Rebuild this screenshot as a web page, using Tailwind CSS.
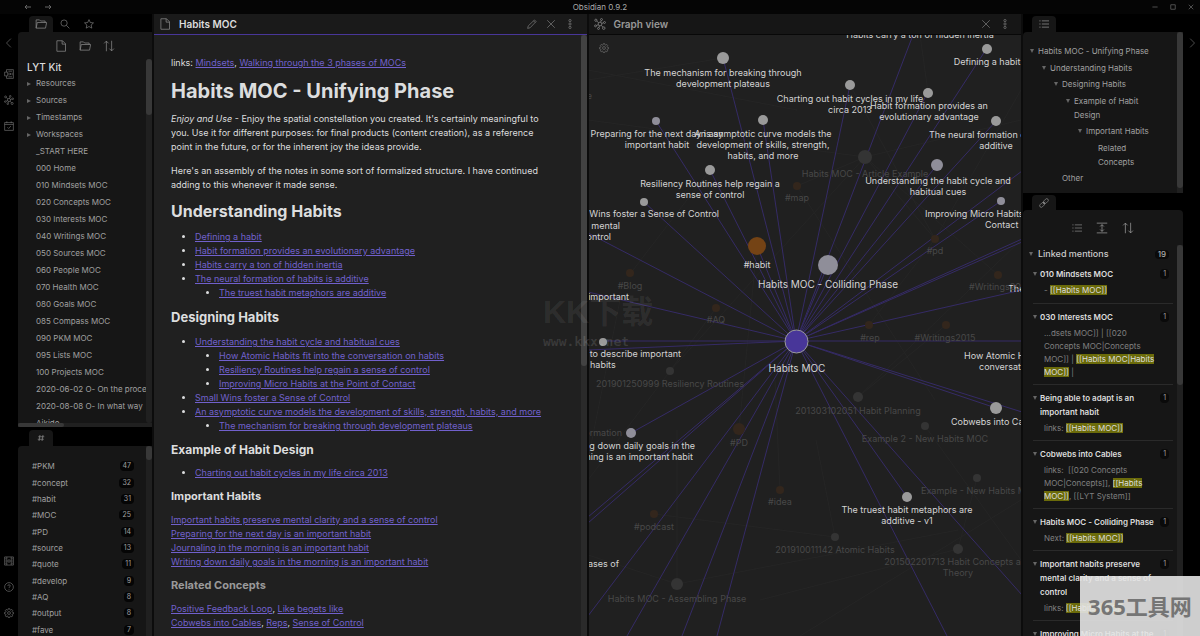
<!DOCTYPE html>
<html lang="en">
<head>
  <meta charset="UTF-8" />
  <meta name="viewport" content="width=device-width, initial-scale=1.0" />
  <title>Obsidian 0.9.2</title>
  <script src="https://cdn.jsdelivr.net/npm/@tailwindcss/browser@4"></script>
</head>
<body class="h-screen flex flex-col overflow-hidden bg-black font-[Inter,sans-serif] text-[8px] text-[#a0a0a0]">

  <!-- Icon set -->
  <svg class="hidden">
    <symbol id="i-left" viewBox="0 0 16 16"><path d="M14 8H2M6 4L2 8l4 4" /></symbol>
    <symbol id="i-right" viewBox="0 0 16 16"><path d="M2 8h12M10 4l4 4-4 4" /></symbol>
    <symbol id="i-chev-left" viewBox="0 0 16 16"><path d="M11 1L4 8l7 7" /></symbol>
    <symbol id="i-chev-right" viewBox="0 0 16 16"><path d="M5 1l7 7-7 7" /></symbol>
    <symbol id="i-file" viewBox="0 0 16 16"><path d="M2.500 1h7.500l4 4v10H2.500zM9.500 1v4.500H14" /></symbol>
    <symbol id="i-folder" viewBox="0 0 16 16"><path d="M1.500 13.500V2.500h4.500l1.500 1.500h6v2M1.500 13.500L3 6h12.500l-1.500 7.500z" /></symbol>
    <symbol id="i-search" viewBox="0 0 16 16"><circle cx="6.500" cy="6.500" r="5" /><path d="M10.200 10.200L15 15" /></symbol>
    <symbol id="i-star" viewBox="0 0 16 16"><path d="M8 1l2.100 4.700 5.100.5-3.800 3.400 1.100 5L8 12l-4.500 2.600 1.100-5L.8 6.200l5.100-.5z" /></symbol>
    <symbol id="i-sort" viewBox="0 0 16 16"><path d="M4.500 15V1.500M1.500 4.500l3-3 3 3M11.500 1v13.500M8.500 11.500l3 3 3-3" /></symbol>
    <symbol id="i-switcher" viewBox="0 0 16 16"><path d="M4 5V1h11v14H4v-4M1 5h5v6H1zM6 8h5M9 6l2 2-2 2M7 3.500h6M7 12.500h6M13 6v4" /></symbol>
    <symbol id="i-graph" viewBox="0 0 16 16"><circle cx="8" cy="8" r="2.500" /><circle cx="2.500" cy="3" r="1.500" /><circle cx="10" cy="2" r="1.300" /><circle cx="14" cy="6" r="1.300" /><circle cx="13" cy="13.500" r="1.700" /><circle cx="6" cy="14" r="1.300" /><circle cx="2" cy="10.500" r="1.300" /><path d="M3.700 4.200l2.500 2M9.700 3.300L8.800 5.600M10.400 7.200l2.300-.8M9.800 9.800l2 2.400M7.400 10.400l-1 2.400M5.700 8.900l-2.500 1.100" /></symbol>
    <symbol id="i-calendar" viewBox="0 0 16 16"><path d="M1 2.500h14V15H1zM1 5.500h14M4.500.5v3M11.500.5v3M5.500 10l2 2 3.500-4" /></symbol>
    <symbol id="i-vault" viewBox="0 0 16 16"><path d="M1 1.500h14v13H1zM4.500 1.500v13M11.500 1.500v13M2 4.500h2M2 8h2M2 11.500h2M12 4.500h2M12 8h2M12 11.500h2" /><circle cx="8" cy="8" r="2" /></symbol>
    <symbol id="i-help" viewBox="0 0 16 16"><circle cx="8" cy="8" r="7" /><path d="M6 6.300c0-2.600 4-2.600 4 0 0 1.500-2 1.500-2 3.200M8 11v1.300" /></symbol>
    <symbol id="i-gear" viewBox="0 0 16 16"><circle cx="8" cy="8" r="2.300" /><path d="M6.900 1h2.200l.4 1.900 1.200.5 1.700-1.100 1.500 1.500-1.100 1.700.5 1.200 1.900.4v2.200l-1.900.4-.5 1.200 1.100 1.700-1.500 1.500-1.700-1.100-1.200.5-.4 1.900H6.900l-.4-1.900-1.200-.5-1.700 1.100-1.500-1.500 1.100-1.700-.5-1.200L.8 9.300V7.100l1.900-.4.5-1.200-1.100-1.700 1.500-1.500 1.700 1.100 1.200-.5z" /></symbol>
    <symbol id="i-pencil" viewBox="0 0 16 16"><path d="M1 15l1-4L12 1.500 14.500 4 5 14zM10.500 3L13 5.500" /></symbol>
    <symbol id="i-close" viewBox="0 0 16 16"><path d="M2 2l12 12M14 2L2 14" /></symbol>
    <symbol id="i-dots" viewBox="0 0 16 16"><circle cx="8" cy="2.500" r="1.800" /><circle cx="8" cy="8" r="1.800" /><circle cx="8" cy="13.500" r="1.800" /></symbol>
    <symbol id="i-list" viewBox="0 0 16 16"><path d="M4.500 3H16M4.500 8H16M4.500 13H16M.5 3h2M.5 8h2M.5 13h2" /></symbol>
    <symbol id="i-expand" viewBox="0 0 16 16"><path d="M1 1.500h14M1 14.500h14M8 3.500v9M5.500 6L8 3.500 10.500 6M5.500 10L8 12.500l2.500-2.500" /></symbol>
    <symbol id="i-link" viewBox="0 0 16 16"><rect x="6.500" y="2.500" width="9" height="5" rx="2.500" transform="rotate(-45 11 5)" /><rect x=".5" y="8.500" width="9" height="5" rx="2.500" transform="rotate(-45 5 11)" /><path d="M6 10l4-4" /></symbol>
    <symbol id="i-hash" viewBox="0 0 16 16"><path d="M6 2L4 14M12 2l-2 12M2.500 5.500h12M1.500 10.500h12" /></symbol>
    <symbol id="i-min" viewBox="0 0 16 16"><path d="M1 8h14" /></symbol>
    <symbol id="i-max" viewBox="0 0 16 16"><path d="M2 2h12v12H2z" /></symbol>
  </svg>

  <!-- Title bar -->
  <header class="relative h-3.5 shrink-0 flex items-center justify-between bg-[#050505] pl-6 pr-1.5 text-[#666]">
    <div class="flex gap-3">
      <button aria-label="Back"><svg class="size-2 fill-none stroke-current stroke-2"><use href="#i-left" /></svg></button>
      <button aria-label="Forward"><svg class="size-2 fill-none stroke-current stroke-2"><use href="#i-right" /></svg></button>
    </div>
    <h1 class="absolute inset-x-0 text-center text-[8px] leading-3 text-[#aaa] pointer-events-none">Obsidian 0.9.2</h1>
    <div class="flex items-center gap-3">
      <button aria-label="Minimize"><svg class="size-1.5 fill-none stroke-current stroke-2"><use href="#i-min" /></svg></button>
      <button aria-label="Maximize"><svg class="size-1.5 fill-none stroke-current stroke-2"><use href="#i-max" /></svg></button>
      <button aria-label="Close"><svg class="size-1.5 fill-none stroke-current stroke-2"><use href="#i-close" /></svg></button>
    </div>
  </header>

  <div class="flex-1 min-h-0 flex">

    <!-- Left ribbon -->
    <nav class="w-[18px] shrink-0 flex flex-col items-center pt-6 pb-[18px] text-[#777]">
      <button aria-label="Collapse" class="mb-[21px]"><svg class="size-2.5 fill-none stroke-current"><use href="#i-chev-left" /></svg></button>
      <div class="flex flex-col gap-4">
        <button aria-label="Quick switcher"><svg class="size-2.5 fill-none stroke-current"><use href="#i-switcher" /></svg></button>
        <button aria-label="Graph view"><svg class="size-2.5 fill-none stroke-current"><use href="#i-graph" /></svg></button>
        <button aria-label="Daily note"><svg class="size-2.5 fill-none stroke-current"><use href="#i-calendar" /></svg></button>
      </div>
      <div class="mt-auto flex flex-col gap-4">
        <button aria-label="Open vault"><svg class="size-2.5 fill-none stroke-current"><use href="#i-vault" /></svg></button>
        <button aria-label="Help"><svg class="size-2.5 fill-none stroke-current"><use href="#i-help" /></svg></button>
        <button aria-label="Settings"><svg class="size-2.5 fill-none stroke-current"><use href="#i-gear" /></svg></button>
      </div>
    </nav>

    <!-- Left sidebar -->
    <aside class="w-[134px] shrink-0 flex flex-col">
      <div class="h-[18px] shrink-0 flex items-end pl-[11px] text-[#888]">
        <button aria-label="Files" class="w-6 h-4 grid place-items-center rounded-t bg-[#161616]"><svg class="size-3 fill-none stroke-current"><use href="#i-folder" /></svg></button>
        <button aria-label="Search" class="w-6 h-4 grid place-items-center"><svg class="size-2.5 fill-none stroke-current"><use href="#i-search" /></svg></button>
        <button aria-label="Starred" class="w-6 h-4 grid place-items-center"><svg class="size-2.5 fill-none stroke-current"><use href="#i-star" /></svg></button>
      </div>
      <section class="h-[395px] shrink-0 flex flex-col rounded-tl bg-[#161616]">
        <div class="h-[27px] shrink-0 flex items-center justify-center gap-3 text-[#888]">
          <button aria-label="New note"><svg class="size-3 fill-none stroke-current"><use href="#i-file" /></svg></button>
          <button aria-label="New folder"><svg class="size-3 fill-none stroke-current"><use href="#i-folder" /></svg></button>
          <button aria-label="Sort"><svg class="size-3 fill-none stroke-current"><use href="#i-sort" /></svg></button>
        </div>
        <div class="flex-1 min-h-0 flex">
          <div class="flex-1 min-w-0 overflow-hidden whitespace-nowrap pl-[9px]">
            <h2 class="text-[10px] leading-4 font-medium text-[#ddd]">LYT Kit</h2>
            <ul id="tree" class="leading-[17px]"></ul>
          </div>
          <div class="w-1.5 shrink-0 rounded bg-[#202020]"><div class="h-14 rounded bg-[#383838]"></div></div>
        </div>
        <div class="h-1 shrink-0 bg-[#202020]"><div class="h-full w-[46px] rounded bg-[#383838]"></div></div>
      </section>
      <div class="h-[19px] shrink-0 flex items-end pl-[11px] text-[#888]">
        <button aria-label="Tags" class="w-6 h-4 grid place-items-center rounded-t bg-[#161616]"><svg class="size-2 fill-none stroke-current stroke-[1.5]"><use href="#i-hash" /></svg></button>
      </div>
      <section class="flex-1 min-h-0 flex rounded-tl bg-[#161616]">
        <ul id="tags" class="flex-1 flex flex-col -mb-0.5 pt-3 pl-3.5 pr-3"></ul>
        <div class="w-1.5 shrink-0 bg-[#202020]"><div class="h-3.5 rounded bg-[#383838]"></div></div>
      </section>
    </aside>

    <!-- Panes -->
    <main class="flex-1 min-w-0 flex gap-0.5 bg-[#0c0c0c] px-0.5">

      <article class="flex-1 min-w-0 flex flex-col bg-[#202020]">
        <header class="h-[21px] shrink-0 flex items-center gap-2 border-b border-[#483699] bg-[#1a1a1a] pl-[5px] pr-3 text-[#888]">
          <svg class="size-3 fill-none stroke-current"><use href="#i-file" /></svg>
          <h2 class="flex-1 text-[10px] font-semibold text-[#ddd]">Habits MOC</h2>
          <button aria-label="Edit"><svg class="size-2.5 fill-none stroke-current"><use href="#i-pencil" /></svg></button>
          <button aria-label="Close pane" class="mx-px"><svg class="size-2.5 fill-none stroke-current"><use href="#i-close" /></svg></button>
          <button aria-label="More options"><svg class="size-2.5 fill-none stroke-current"><use href="#i-dots" /></svg></button>
        </header>
        <div class="flex-1 min-h-0 flex">
          <div class="flex-1 min-w-0 overflow-hidden flex flex-col gap-2.5 pt-[21px] pl-[17px] pr-8 text-[9px] leading-[14px] text-[#dcddde] [&_a]:text-[#7160cc] [&_a]:underline [&_h3]:font-bold [&_ul]:list-disc [&_ul]:pl-6">
            <p>links: <a href="#">Mindsets</a>, <a href="#">Walking through the 3 phases of MOCs</a></p>
            <h3 class="text-[20px] leading-[22px]">Habits MOC - Unifying Phase</h3>
            <p><em>Enjoy and Use</em> - Enjoy the spatial constellation you created. It's certainly meaningful to you. Use it for different purposes: for final products (content creation), as a reference point in the future, or for the inherent joy the ideas provide.</p>
            <p>Here's an assembly of the notes in some sort of formalized structure. I have continued adding to this whenever it made sense.</p>
            <h3 class="text-[16px] leading-[18px]">Understanding Habits</h3>
            <ul>
              <li><a href="#">Defining a habit</a></li>
              <li><a href="#">Habit formation provides an evolutionary advantage</a></li>
              <li><a href="#">Habits carry a ton of hidden inertia</a></li>
              <li><a href="#">The neural formation of habits is additive</a>
                <ul>
                  <li><a href="#">The truest habit metaphors are additive</a></li>
                </ul>
              </li>
            </ul>
            <h3 class="text-[13px] leading-[15px]">Designing Habits</h3>
            <ul>
              <li><a href="#">Understanding the habit cycle and habitual cues</a>
                <ul>
                  <li><a href="#">How Atomic Habits fit into the conversation on habits</a></li>
                  <li><a href="#">Resiliency Routines help regain a sense of control</a></li>
                  <li><a href="#">Improving Micro Habits at the Point of Contact</a></li>
                </ul>
              </li>
              <li><a href="#">Small Wins foster a Sense of Control</a></li>
              <li><a href="#">An asymptotic curve models the development of skills, strength, habits, and more</a>
                <ul>
                  <li><a href="#">The mechanism for breaking through development plateaus</a></li>
                </ul>
              </li>
            </ul>
            <h3 class="text-[12px] leading-[13px]">Example of Habit Design</h3>
            <ul>
              <li><a href="#">Charting out habit cycles in my life circa 2013</a></li>
            </ul>
            <h3 class="text-[11px] leading-[13px]">Important Habits</h3>
            <p>
              <a href="#">Important habits preserve mental clarity and a sense of control</a><br />
              <a href="#">Preparing for the next day is an important habit</a><br />
              <a href="#">Journaling in the morning is an important habit</a><br />
              <a href="#">Writing down daily goals in the morning is an important habit</a>
            </p>
            <h3 class="text-[11px] leading-[13px] text-[#999]">Related Concepts</h3>
            <p>
              <a href="#">Positive Feedback Loop</a>, <a href="#">Like begets like</a><br />
              <a href="#">Cobwebs into Cables</a>, <a href="#">Reps</a>, <a href="#">Sense of Control</a>
            </p>
          </div>
          <div class="w-1.5 shrink-0 bg-[#2a2a2a]"><div class="h-[331px] rounded bg-[#424242]"></div></div>
        </div>
      </article>

      <section class="flex-1 min-w-0 flex flex-col bg-[#202020]">
        <header class="h-[21px] shrink-0 flex items-center gap-2 border-b border-[#080808] bg-[#161616] pl-[5px] pr-[11px] text-[#888]">
          <svg class="size-3 fill-none stroke-current"><use href="#i-graph" /></svg>
          <h2 class="flex-1 text-[10px] font-semibold text-[#999]">Graph view</h2>
          <button aria-label="Close pane" class="mx-px"><svg class="size-2.5 fill-none stroke-current"><use href="#i-close" /></svg></button>
          <button aria-label="More options"><svg class="size-2.5 fill-none stroke-current"><use href="#i-dots" /></svg></button>
        </header>
        <div class="relative flex-1 min-h-0 overflow-hidden">
          <svg class="w-full h-full text-[9px]"><g id="graph" transform="translate(-589 -35)"></g></svg>
          <button aria-label="Graph settings" class="absolute top-2 left-2.5 text-[#777]"><svg class="size-2.5 fill-none stroke-current"><use href="#i-gear" /></svg></button>
        </div>
      </section>
    </main>

    <!-- Right sidebar -->
    <aside class="w-[160px] shrink-0 flex flex-col">
      <div class="h-[18px] shrink-0 flex items-end pl-[9px] text-[#aaa]">
        <button aria-label="Outline" class="w-6 h-4 grid place-items-center rounded-t bg-[#161616]"><svg class="size-2.5 fill-none stroke-current"><use href="#i-list" /></svg></button>
      </div>
      <section class="h-[161px] shrink-0 flex rounded-t bg-[#161616]">
        <ul id="outline" class="flex-1 min-w-0 flex flex-col justify-between pt-3 pb-2 pl-[7px] leading-[14px]"></ul>
        <div class="w-1.5 shrink-0 bg-[#202020]"><div class="h-[156px] rounded bg-[#383838]"></div></div>
      </section>
      <div class="h-[17px] shrink-0 flex items-end pl-[9px] text-[#999]">
        <button aria-label="Backlinks" class="w-6 h-[15px] grid place-items-center rounded-t bg-[#161616]"><svg class="size-2.5 fill-none stroke-current"><use href="#i-link" /></svg></button>
      </div>
      <section class="flex-1 min-h-0 flex flex-col rounded-t bg-[#161616]">
        <div class="h-[35px] shrink-0 flex items-center justify-center gap-3.5 text-[#999]">
          <button aria-label="Collapse results"><svg class="size-2.5 fill-none stroke-current"><use href="#i-list" /></svg></button>
          <button aria-label="Show more context"><svg class="size-3 fill-none stroke-current"><use href="#i-expand" /></svg></button>
          <button aria-label="Change sort order"><svg class="size-3 fill-none stroke-current"><use href="#i-sort" /></svg></button>
        </div>
        <div class="flex-1 min-h-0 flex">
          <div class="flex-1 min-w-0 overflow-hidden pl-1.5 pr-2">
            <h2 class="flex items-center gap-[5px] h-[18px] text-[9px] font-medium text-[#ccc]">
              <svg class="size-1 fill-[#666]"><path d="M0 0h4L2 4z" /></svg>
              <span class="flex-1">Linked mentions</span>
              <span class="rounded-sm bg-[#0a0a0a] px-[3px] text-[8px] leading-[9px] text-[#aaa]">19</span>
            </h2>
            <ul id="mentions" class="-mr-1 pl-1"></ul>
          </div>
          <div class="w-1.5 shrink-0 bg-[#202020]"><div class="h-[140px] rounded bg-[#383838]"></div></div>
        </div>
      </section>
    </aside>

    <!-- Right ribbon -->
    <nav class="w-[17px] shrink-0 flex flex-col items-center pt-6 text-[#777]">
      <button aria-label="Collapse"><svg class="size-2.5 fill-none stroke-current"><use href="#i-chev-right" /></svg></button>
    </nav>
  </div>

  <!-- Watermarks -->
  <div class="absolute left-[543px] top-[291px] text-white/8 font-['Liberation_Sans','Noto_Sans_CJK_SC',sans-serif] font-bold pointer-events-none">
    <p class="text-[32px] leading-[42px]">KK下载</p>
    <p class="font-['DejaVu_Sans_Mono',monospace] text-[13px] leading-[17px] text-white/12">www.kkx.net</p>
  </div>
  <div class="absolute right-0 bottom-0 w-[120px] h-[60px] grid place-items-center bg-[#e4e4e4]/90 font-['Noto_Sans','Noto_Sans_CJK_SC',sans-serif] text-[22px] font-bold text-[#757575] whitespace-nowrap pointer-events-none">365工具网</div>

  <script>
const folders = ['Resources', 'Sources', 'Timestamps', 'Workspaces'];
const files = ['_START HERE', '000 Home', '010 Mindsets MOC', '020 Concepts MOC', '030 Interests MOC', '040 Writings MOC', '050 Sources MOC', '060 People MOC', '070 Health MOC', '080 Goals MOC', '085 Compass MOC', '090 PKM MOC', '095 Lists MOC', '100 Projects MOC', '2020-06-02 O- On the process', '2020-08-08 O- In what way', 'Aikido'];
document.getElementById('tree').innerHTML =
  folders.map(f => `<li class="flex items-center gap-[5px]"><svg class="size-1 fill-[#666]"><path d="M0 0v4l4-2z" /></svg>${f}</li>`).join('') +
  files.map(f => `<li class="pl-[9px]">${f}</li>`).join('');

const tags = [['#PKM', 47], ['#concept', 32], ['#habit', 31], ['#MOC', 25], ['#PD', 14], ['#source', 13], ['#quote', 11], ['#develop', 9], ['#AQ', 8], ['#output', 8], ['#fave', 7]];
document.getElementById('tags').innerHTML = tags.map(([t, n]) =>
  `<li class="flex-1 flex items-center justify-between">${t}<span class="rounded-sm bg-[#050505] px-[3px] text-[7px] leading-[10px]">${n}</span></li>`).join('');

// [depth, title, has children]
const outline = [[0, 'Habits MOC - Unifying Phase', 1], [1, 'Understanding Habits', 1], [2, 'Designing Habits', 1], [3, 'Example of Habit Design', 1], [4, 'Important Habits', 1], [5, 'Related Concepts', 0], [2, 'Other', 0]];
document.getElementById('outline').innerHTML = outline.map(([d, t, kids]) =>
  `<li class="flex gap-1 pr-5" style="padding-left:${d * 12}px"><svg class="size-1 mt-[5px] shrink-0 ${kids ? 'fill-[#666]' : 'fill-none'}"><path d="M0 0h4L2 4z" /></svg><span>${t}</span></li>`).join('');

const mark = s => s.replace(/\{(.+?)\}/g, '<mark class="bg-[#6b6b0a] text-[#ddd]">$1</mark>');
const mentions = [
  ['010 Mindsets MOC', '- {[[Habits MOC]]}'],
  ['030 Interests MOC', '...dsets MOC]] | [[020 Concepts MOC|Concepts MOC]] | {[[Habits MOC|Habits MOC]]} |'],
  ['Being able to adapt is an important habit', 'links: {[[Habits MOC]]}'],
  ['Cobwebs into Cables', 'links: &nbsp;[[020 Concepts MOC|Concepts]], {[[Habits MOC]]}, [[LYT System]]'],
  ['Habits MOC - Colliding Phase', 'Next: {[[Habits MOC]]}'],
  ['Important habits preserve mental clarity and a sense of control', 'links: {[[Habits MOC]]}'],
  ['Improving Micro Habits at the Point of Contact', 'links: {[[Habits MOC]]}'],
];
document.getElementById('mentions').innerHTML = mentions.map(([t, body]) =>
  `<li class="border-b border-[#2a2a2a] pt-1 pb-1.5 [&+li]:pt-1.5 [&+li]:pb-[5px]">
    <div class="flex items-start gap-[3px] pr-1">
      <svg class="size-1 mt-[5px] shrink-0 fill-[#666]"><path d="M0 0h4L2 4z" /></svg>
      <h3 class="flex-1 leading-[14px] font-semibold text-[#ddd]">${t}</h3>
      <span class="rounded-sm bg-[#0a0a0a] px-[3px] mt-0.5 text-[7px] leading-[10px]">1</span>
    </div>
    <p class="mt-[3px] pl-[11px] pr-3.5 leading-[13px] text-[#808080]">${mark(body)}</p>
  </li>`).join('');

// Link ends that leave the hub node
const hub = [796, 341];
const ends = [[723, 58], [656, 121], [763, 120], [710, 170], [644, 202], [588, 233], [757, 246], [828, 265], [850, 85], [913, 35], [987, 48], [928, 92], [996, 121], [937, 165], [1001, 201], [1022, 171], [1022, 239], [1022, 242], [1022, 290], [1022, 341], [588, 292], [603, 341], [588, 350], [631, 433], [588, 517], [588, 523], [588, 616], [627, 636], [682, 636], [717, 636], [907, 497], [1022, 595], [947, 636], [996, 408], [1022, 412]];
const faint = [[588, 80, 723, 58], [588, 120, 865, 157], [865, 157, 670, 371], [865, 157, 1021, 120], [797, 186, 865, 157], [797, 186, 935, 400], [935, 239, 865, 157], [935, 239, 1021, 90], [998, 275, 865, 157], [869, 325, 935, 239], [946, 325, 858, 397], [630, 274, 710, 170], [716, 308, 670, 371], [670, 371, 588, 480], [858, 397, 1021, 240], [925, 426, 1021, 560], [977, 478, 958, 549], [739, 429, 757, 246], [780, 490, 775, 380], [654, 514, 835, 537], [835, 537, 816, 440], [958, 549, 760, 600], [677, 584, 677, 430], [677, 584, 588, 555], [677, 584, 958, 530], [850, 85, 935, 239], [928, 92, 920, 35], [588, 70, 797, 110], [1021, 500, 800, 636], [620, 300, 588, 460]];
// [x, y, radius, class]
const white = 'fill-[#9a9a9a]', lilac = 'fill-[#8f8e99]', grey = 'fill-[#343434]', brown = 'fill-[#33261c]';
const nodes = [[723, 58, 6, white], [656, 121, 4, lilac], [763, 120, 5, white], [710, 170, 5, white], [644, 202, 4, white], [757, 246, 9, 'fill-[#744315]'], [828, 265, 10, lilac], [850, 85, 5, white], [987, 49, 5, white], [928, 93, 5, white], [996, 121, 5, white], [937, 165, 6, lilac], [1001, 201, 4, lilac], [603, 342, 4, white], [631, 433, 5, lilac], [907, 497, 5, white], [996, 408, 6, white], [865, 157, 7, grey], [670, 371, 4, grey], [858, 397, 5, grey], [925, 426, 4, grey], [977, 478, 4, grey], [835, 537, 4, grey], [958, 549, 5, grey], [677, 584, 6, grey], [797, 186, 4, brown], [935, 239, 4, brown], [998, 275, 4, brown], [869, 325, 4, brown], [946, 325, 4, brown], [630, 273, 4, brown], [716, 308, 4, brown], [739, 429, 6, brown], [780, 490, 4, brown], [654, 514, 4, brown]];
// [x, baseline, anchor, dimmed, ...lines]
const labels = [
  [920, 38, 'middle', 0, 'Habits carry a ton of hidden inertia'], [987, 65, 'middle', 0, 'Defining a habit'],
  [723, 76, 'middle', 0, 'The mechanism for breaking through', 'development plateaus'],
  [850, 102, 'middle', 0, 'Charting out habit cycles in my life', 'circa 2013'],
  [929, 109, 'middle', 0, 'Habit formation provides an', 'evolutionary advantage'],
  [657, 137, 'middle', 0, 'Preparing for the next day is an', 'important habit'],
  [763, 137, 'middle', 0, 'An asymptotic curve models the', 'development of skills, strength,', 'habits, and more'],
  [929, 138, 'start', 0, 'The neural formation of habits is'], [996, 149, 'middle', 0, 'additive'],
  [710, 187, 'middle', 0, 'Resiliency Routines help regain a', 'sense of control'],
  [938, 184, 'middle', 0, 'Understanding the habit cycle and', 'habitual cues'],
  [719, 217, 'end', 0, 'Small Wins foster a Sense of Control'], [620, 229, 'end', 0, 'preserve mental'], [611, 240, 'end', 0, 'sense of control'],
  [925, 217, 'start', 0, 'Improving Micro Habits at the'], [985, 228, 'start', 0, 'Contact'],
  [1008, 292, 'start', 0, 'The cure'], [629, 300, 'end', 0, 'morning is an important'],
  [681, 357, 'end', 0, 'Need to describe important'], [590, 368, 'start', 0, 'habits'],
  [964, 359, 'start', 0, 'How Atomic Habits fit'], [979, 370, 'start', 0, 'conversation on'],
  [951, 425, 'start', 0, 'Cobwebs into Cables'], [695, 449, 'end', 0, 'Writing down daily goals in the'], [693, 460, 'end', 0, 'morning is an important habit'],
  [907, 513, 'middle', 0, 'The truest habit metaphors are', 'additive - v1'], [619, 567, 'end', 0, '3 phases of'],
  [757, 268, 'middle', 0, '#habit'],
  [865, 177, 'middle', 1, 'Habits MOC - Article Example'], [797, 201, 'middle', 1, '#map'], [935, 254, 'middle', 1, '#pd'], [969, 290, 'start', 1, '#Writings2016'],
  [630, 289, 'middle', 1, '#Blog'], [716, 323, 'middle', 1, '#AQ'], [870, 341, 'middle', 1, '#rep'], [945, 341, 'middle', 1, '#Writings2015'],
  [670, 387, 'middle', 1, '201901250999 Resiliency Routines'], [858, 414, 'middle', 1, '201303102051 Habit Planning'], [925, 442, 'middle', 1, 'Example 2 - New Habits MOC'],
  [622, 436, 'end', 1, 'Formation'], [739, 446, 'middle', 1, '#PD'], [921, 494, 'start', 1, 'Example - New Habits MOC'], [780, 505, 'middle', 1, '#idea'],
  [654, 530, 'middle', 1, '#podcast'], [835, 553, 'middle', 1, '201910011142 Atomic Habits'], [958, 565, 'middle', 1, '201502201713 Habit Concepts and', 'Theory'],
  [677, 602, 'middle', 1, 'Habits MOC - Assembling Phase'], [592, 99, 'end', 1, 'Note'],
];
const line = (a, b, c, d, cls) => `<line x1="${a}" y1="${b}" x2="${c}" y2="${d}" class="${cls}" />`;
document.getElementById('graph').innerHTML =
  faint.map(f => line(...f, 'stroke-[#252525]')).join('') +
  ends.map(e => line(...hub, ...e, 'stroke-[#352b66]')).join('') +
  nodes.map(([x, y, r, cls]) => `<circle cx="${x}" cy="${y}" r="${r}" class="${cls}" />`).join('') +
  `<circle cx="796.500" cy="341.500" r="11.500" class="fill-[#483699] stroke-[#9a9a9a]" />` +
  labels.map(([x, y, anchor, dim, ...lines]) => lines.map((t, i) =>
    `<text x="${x}" y="${y + i * 11}" text-anchor="${anchor}" class="${dim ? 'fill-[#484848]' : 'fill-[#d4d4d4]'}">${t}</text>`).join('')).join('') +
  `<text x="828" y="288" text-anchor="middle" class="text-[10px] fill-[#d4d4d4]">Habits MOC - Colliding Phase</text>
   <text x="797" y="372" text-anchor="middle" class="text-[10px] fill-[#d4d4d4]">Habits MOC</text>`;
  </script>
</body>
</html>
